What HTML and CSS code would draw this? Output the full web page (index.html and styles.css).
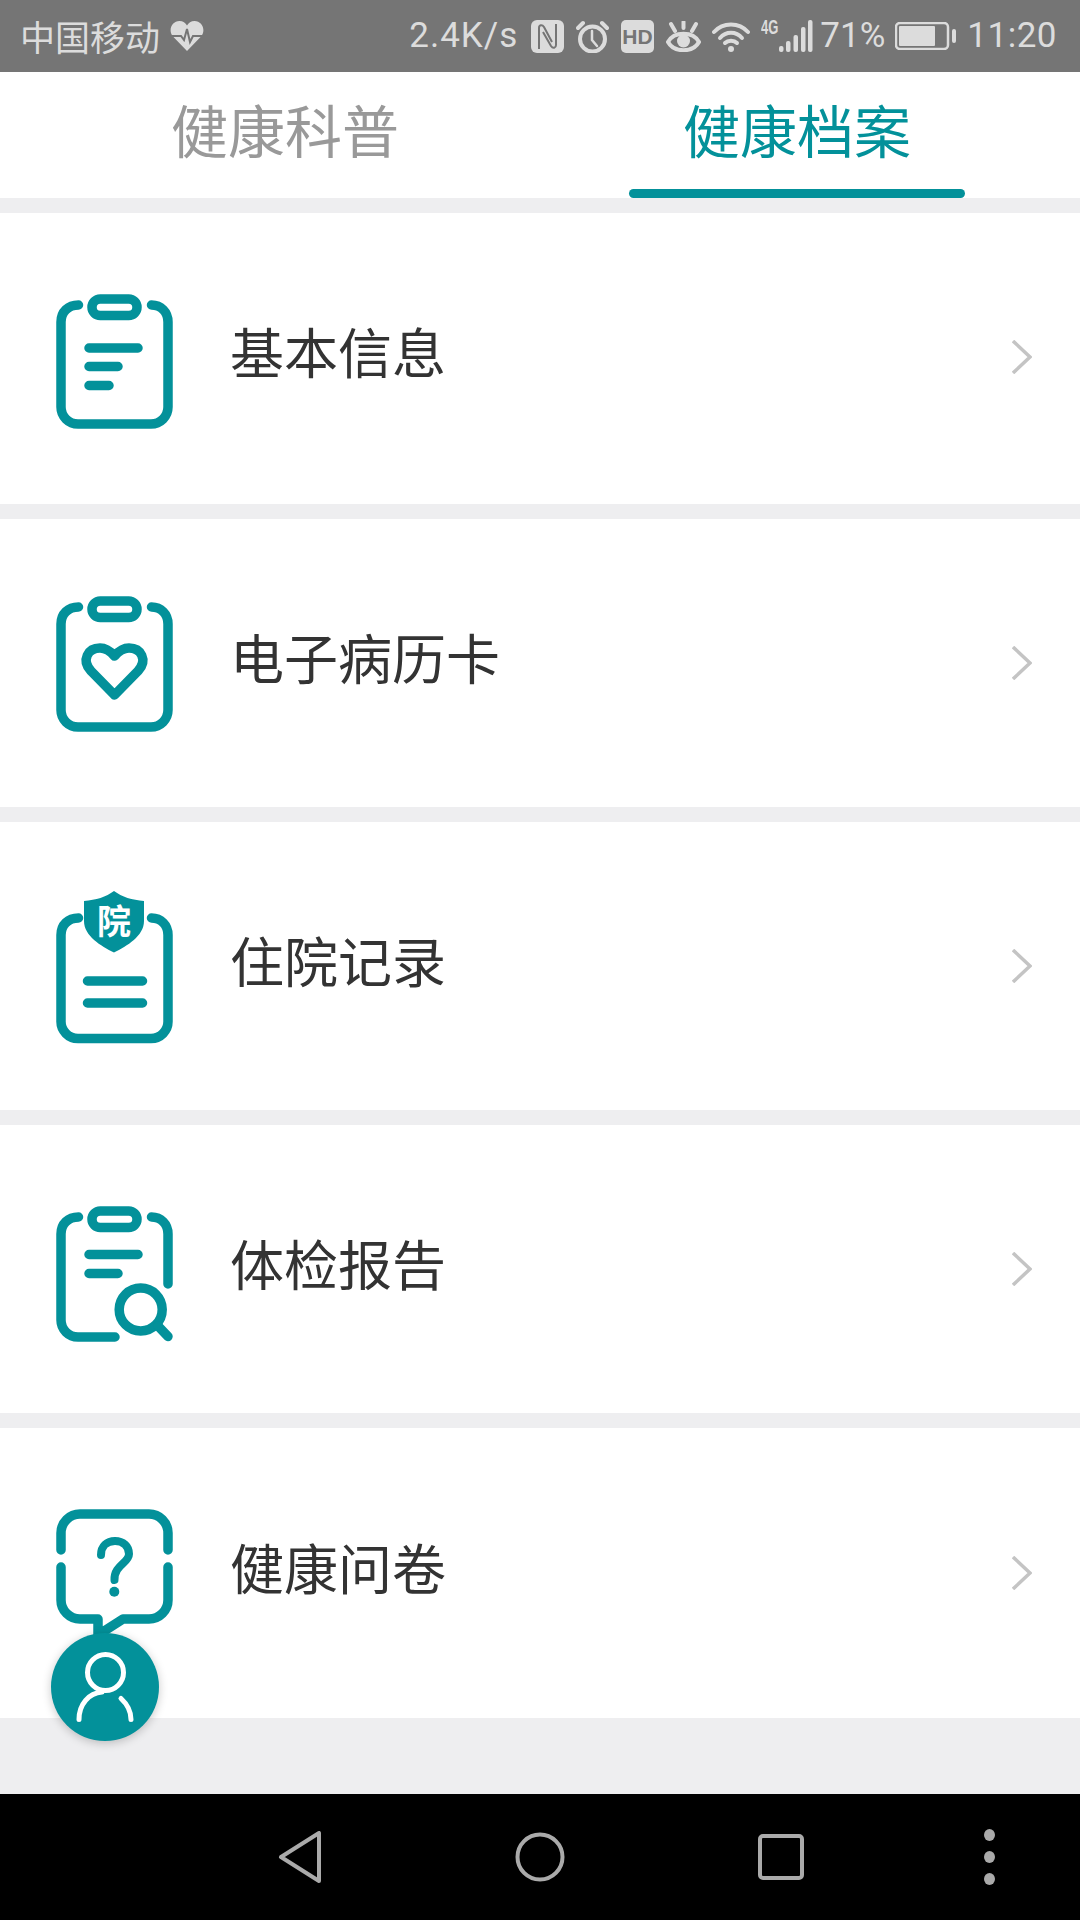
FILE: index.html
```html
<!DOCTYPE html>
<html lang="zh-CN">
<head>
  <meta charset="UTF-8">
  <meta name="viewport" content="width=device-width, initial-scale=1.0">
  <title>健康档案</title>
  <link rel="stylesheet" href="styles.css">
</head>
<body>
  <div class="phone">
    <div class="statusbar">
      <div class="status-left">
        <span class="carrier">中国移动</span>
        <svg class="st-heart" viewBox="0 0 34 30">
          <path class="solid" d="M17 30 L2.500 15 C-2 9 2 0 9.500 0 C13 0 15.500 2 17 4.500 C18.500 2 21 0 24.500 0 C32 0 36 9 31.500 15 Z"/>
          <path class="pulse" d="M0 15 H11 L14 19 L17 8 L20 21 L23 15 H34"/>
        </svg>
      </div>
      <div class="status-right">
        <span class="speed">2.4K/s</span>
        <svg class="st-icon nfc" viewBox="0 0 33 33">
          <rect class="solid" width="33" height="33" rx="6"/>
          <path class="cut-line" d="M8 29 V8 C8 5 11 4 13 7 L21 22 M25 4 V25 C25 28 22 29 20 26 L12 12"/>
        </svg>
        <svg class="st-icon alarm" viewBox="0 0 33 33">
          <circle class="line" cx="16.500" cy="19" r="12.500"/>
          <path class="line thin" d="M16 11 V20 L21 26"/>
          <path class="line" d="M2 8 L7 3 M31 8 L26 3"/>
        </svg>
        <svg class="st-icon hd" viewBox="0 0 33 33">
          <rect class="solid" width="33" height="33" rx="5"/>
          <text class="hd-label" x="16.500" y="24">HD</text>
        </svg>
        <svg class="st-icon eye" viewBox="0 0 35 31">
          <path class="line" d="M2 21 C8 10 27 10 33 21 C27 32 8 32 2 21 Z"/>
          <circle class="solid" cx="17.500" cy="20" r="6.500"/>
          <path class="line" d="M17.500 1 V7 M5 3 L9 10 M30 3 L26 10"/>
        </svg>
        <svg class="st-icon wifi" viewBox="0 0 38 31">
          <path class="line" d="M2 11 C11 1 27 1 36 11"/>
          <path class="line" d="M8 17 C14 10 24 10 30 17"/>
          <path class="line" d="M13 22 C16 19 22 19 25 22"/>
          <circle class="solid" cx="19" cy="28" r="3"/>
        </svg>
        <span class="net">4G</span>
        <svg class="st-icon signal" viewBox="0 0 35 32">
          <rect class="solid" x="1" y="26" width="4.500" height="6" rx="2"/>
          <rect class="solid" x="8" y="21" width="4.500" height="11" rx="2"/>
          <rect class="solid" x="15.500" y="15" width="4.500" height="17" rx="2"/>
          <rect class="solid" x="23" y="7" width="4.500" height="25" rx="2"/>
          <rect class="solid" x="30" y="0" width="4.500" height="32" rx="2"/>
        </svg>
        <span class="percent">71%</span>
        <svg class="st-icon battery" viewBox="0 0 61 28">
          <rect class="line thin" x="1" y="1" width="52" height="26" rx="4"/>
          <rect class="solid" x="4" y="4" width="36" height="20" rx="1"/>
          <rect class="solid" x="57" y="7" width="4" height="14" rx="2"/>
        </svg>
        <span class="clock">11:20</span>
      </div>
    </div>

    <nav class="tabs">
      <div class="tab">健康科普</div>
      <div class="tab active">健康档案</div>
    </nav>

    <ul class="records">
      <li class="row">
        <svg class="row-icon" viewBox="0 0 120 160">
          <path d="M22.500 26 C12 26 5 33 5 43 V128 A17 17 0 0 0 22 145 H95 A17 17 0 0 0 112 128 V43 C112 33 105 26 95.500 26"/>
          <rect x="36" y="20" width="45" height="16.500" rx="8.250"/>
          <path d="M33 69 H82 M33 87.500 H62 M33 106.500 H53"/>
        </svg>
        <span class="row-label">基本信息</span>
        <svg class="chevron" viewBox="0 0 20 34"><path d="M1 1 L18 17 L1 33"/></svg>
      </li>
      <li class="row">
        <svg class="row-icon" viewBox="0 0 120 160">
          <path d="M22.500 24 C12 24 5 31 5 41 V127 A17 17 0 0 0 22 144 H95 A17 17 0 0 0 112 127 V41 C112 31 105 24 95.500 24"/>
          <rect x="36" y="18" width="45" height="16.500" rx="8.250"/>
          <path d="M58.500 112 L35 88 C25 77 32 65 44 65 C51 65 55 69 58.500 73 C62 69 66 65 73 65 C85 65 92 77 82 88 Z"/>
        </svg>
        <span class="row-label">电子病历卡</span>
        <svg class="chevron" viewBox="0 0 20 34"><path d="M1 1 L18 17 L1 33"/></svg>
      </li>
      <li class="row">
        <svg class="row-icon" viewBox="0 0 120 160">
          <path d="M22.500 32 C12 32 5 39 5 49 V135 A17 17 0 0 0 22 152.500 H95 A17 17 0 0 0 112 135 V49 C112 39 105 32 95.500 32"/>
          <path class="fill" d="M58 5 C50 11 40 14 28 15 V35 C28 50 45 60 58 66.500 C71 60 88 50 88 35 V15 C76 14 66 11 58 5 Z"/>
          <text class="shield-label" x="58" y="48">院</text>
          <path d="M31.500 95 H86.500 M31.500 117 H86.500"/>
        </svg>
        <span class="row-label">住院记录</span>
        <svg class="chevron" viewBox="0 0 20 34"><path d="M1 1 L18 17 L1 33"/></svg>
      </li>
      <li class="row">
        <svg class="row-icon" viewBox="0 0 120 160">
          <path d="M22.500 28 C12 28 5 35 5 45 V131 A17 17 0 0 0 22 148 H59"/>
          <path d="M95.500 28 C105 28 112 35 112 45 V95"/>
          <rect x="36" y="22" width="45" height="16.500" rx="8.250"/>
          <path d="M33 65.500 H82 M33 84.500 H62"/>
          <circle cx="84.700" cy="120.500" r="21.500"/>
          <path d="M102 137 L112 147.500"/>
        </svg>
        <span class="row-label">体检报告</span>
        <svg class="chevron" viewBox="0 0 20 34"><path d="M1 1 L18 17 L1 33"/></svg>
      </li>
      <li class="row">
        <svg class="row-icon" viewBox="0 0 120 160">
          <path d="M5 57 V40 A19 19 0 0 1 24 21 H93 A19 19 0 0 1 112 40 V57"/>
          <path d="M5 74 V107 A19 19 0 0 0 24 126 H42 V142 L67 126 H93 A19 19 0 0 0 112 107 V74"/>
          <path class="thin" d="M45 62 C45 53 51 48 59 48 C67 48 73 53 73 61 C73 70 58 72 58.500 87"/>
          <circle class="fill" cx="58.300" cy="98.700" r="5"/>
        </svg>
        <span class="row-label">健康问卷</span>
        <svg class="chevron" viewBox="0 0 20 34"><path d="M1 1 L18 17 L1 33"/></svg>
      </li>
    </ul>

    <div class="page-fill"></div>

    <div class="fab">
      <svg viewBox="0 0 108 108">
        <circle cx="54.500" cy="39.500" r="18"/>
        <path d="M28 86.500 C28 71 38 60 51 59"/>
        <path d="M80 86.500 C80 78 76 71 70 65.500"/>
      </svg>
    </div>

    <div class="navbar">
      <svg class="nav-back" viewBox="0 0 44 52">
        <path d="M3 26 L41 2 V50 Z" />
      </svg>
      <svg class="nav-home" viewBox="0 0 50 50"><circle cx="25" cy="25" r="22.500"/></svg>
      <svg class="nav-recent" viewBox="0 0 46 46"><rect x="2" y="2" width="42" height="42" rx="3"/></svg>
      <div class="nav-more">
        <span></span>
        <span></span>
        <span></span>
      </div>
    </div>
  </div>
</body>
</html>
```

FILE: styles.css
```css
:root {
  --teal: #03919a;
  --band: #eeeef0;
  --status-bg: #757575;
  --status-fg: #dcdcdc;
  --text-color: #333333;
  --nav-icon: #aaaaaa;
}

* {
  box-sizing: border-box;
}

body {
  margin: 0;
  padding: 0;
  background-color: var(--band);
  font-family: "Noto Sans CJK SC", "Noto Sans", sans-serif;
}

.phone {
  position: relative;
  display: flex;
  flex-direction: column;
  width: 1080px;
  height: 1920px;
  overflow: hidden;
}

/* status bar */
.statusbar {
  display: flex;
  justify-content: space-between;
  align-items: center;
  height: 72px;
  padding: 0 23px 0 20px;
  background-color: var(--status-bg);
  color: var(--status-fg);
}

.status-left,
.status-right {
  display: flex;
  align-items: center;
}

.carrier {
  font-size: 35px;
  line-height: 72px;
}

.st-heart {
  width: 34px;
  height: 30px;
  margin-left: 10px;
}

.solid {
  fill: var(--status-fg);
}

.cut-line {
  fill: none;
  stroke: var(--status-bg);
  stroke-width: 2;
}

.pulse {
  fill: none;
  stroke: var(--status-bg);
  stroke-width: 2;
}

.line {
  fill: none;
  stroke: var(--status-fg);
  stroke-width: 4;
  stroke-linecap: round;
}

.line.thin {
  stroke-width: 2.500;
}

.speed,
.percent,
.clock {
  font-family: Roboto, sans-serif;
  font-size: 35px;
  line-height: 72px;
}

.speed {
  letter-spacing: 1px;
}

.st-icon {
  display: block;
}

.nfc,
.alarm,
.hd {
  width: 33px;
  height: 33px;
}

.nfc {
  margin-left: 13px;
}

.alarm,
.hd {
  margin-left: 12px;
}

.hd-label {
  font-family: "Liberation Sans", sans-serif;
  font-size: 21px;
  font-weight: bold;
  text-anchor: middle;
  fill: var(--status-bg);
}

.eye {
  width: 35px;
  height: 31px;
  margin-left: 12px;
}

.wifi {
  width: 38px;
  height: 31px;
  margin-left: 11px;
}

.net {
  align-self: flex-start;
  width: 17px;
  margin: 17px 0 0 11px;
  font-family: "Liberation Sans", sans-serif;
  font-size: 20px;
  font-weight: bold;
  line-height: 20px;
  transform: scaleX(0.65);
  transform-origin: left;
}

.signal {
  width: 35px;
  height: 32px;
}

.percent {
  margin-left: 7px;
}

.battery {
  width: 61px;
  height: 28px;
  margin-left: 10px;
}

.clock {
  margin-left: 11px;
  letter-spacing: 0.500px;
}

/* tabs */
.tabs {
  display: flex;
  gap: 176px;
  height: 126px;
  padding-left: 117px;
  background-color: #ffffff;
}

.tab {
  width: 336px;
  font-size: 57px;
  line-height: 112px;
  height: 126px;
  text-align: center;
  color: #999999;
}

.tab.active {
  position: relative;
  color: var(--teal);
}

.tab.active::after {
  content: "";
  position: absolute;
  left: 0;
  right: 0;
  bottom: 0;
  height: 9px;
  border-radius: 5px;
  background-color: var(--teal);
}

/* record rows */
.records {
  display: flex;
  flex-direction: column;
  gap: 15px;
  margin: 15px 0 0;
  padding: 0;
  list-style: none;
}

.row {
  display: flex;
  align-items: center;
  height: 288px;
  padding: 0 48px 0 56px;
  background-color: #ffffff;
}

.row:first-child {
  height: 291px;
}

.row:last-child {
  height: 290px;
}

.row:first-child .chevron {
  margin-top: -4px;
}

.row:first-child .row-label {
  margin-top: -16px;
}

.row-icon {
  width: 120px;
  height: 160px;
  flex-shrink: 0;
  fill: none;
  stroke: var(--teal);
  stroke-width: 9.500;
  stroke-linecap: round;
  stroke-linejoin: round;
}

.row-icon .fill {
  fill: var(--teal);
  stroke: none;
}

.row-icon .thin {
  stroke-width: 8;
}

.shield-label {
  font-size: 34px;
  font-weight: bold;
  text-anchor: middle;
  fill: #ffffff;
  stroke: none;
}

.row-label {
  flex: 1;
  margin: -13px 0 0 54px;
  font-size: 54px;
  line-height: 72px;
  color: var(--text-color);
}

.chevron {
  width: 20px;
  height: 34px;
  flex-shrink: 0;
  fill: none;
  stroke: #c4c4c4;
  stroke-width: 3.500;
}

.page-fill {
  flex: 1;
  background-color: var(--band);
}

/* floating profile button */
.fab {
  position: absolute;
  left: 51px;
  top: 1633px;
  width: 108px;
  height: 108px;
  border-radius: 50%;
  background-color: var(--teal);
  box-shadow: 0 2px 10px rgba(0, 0, 0, 0.22);
}

.fab svg {
  display: block;
  width: 108px;
  height: 108px;
  fill: none;
  stroke: #ffffff;
  stroke-width: 5;
  stroke-linecap: round;
}

/* android nav bar */
.navbar {
  display: flex;
  align-items: center;
  height: 126px;
  padding: 0 0 0 278px;
  background-color: #000000;
}

.navbar svg {
  display: block;
  fill: none;
  stroke: var(--nav-icon);
  stroke-width: 4;
  stroke-linejoin: round;
}

.nav-back {
  width: 44px;
  height: 52px;
}

.nav-home {
  width: 50px;
  height: 50px;
  margin-left: 193px;
}

.nav-recent {
  width: 46px;
  height: 46px;
  margin-left: 193px;
}

.nav-more {
  display: flex;
  flex-direction: column;
  gap: 10px;
  margin-left: 180px;
}

.nav-more span {
  width: 11px;
  height: 12px;
  border-radius: 50%;
  background-color: var(--nav-icon);
}
```
